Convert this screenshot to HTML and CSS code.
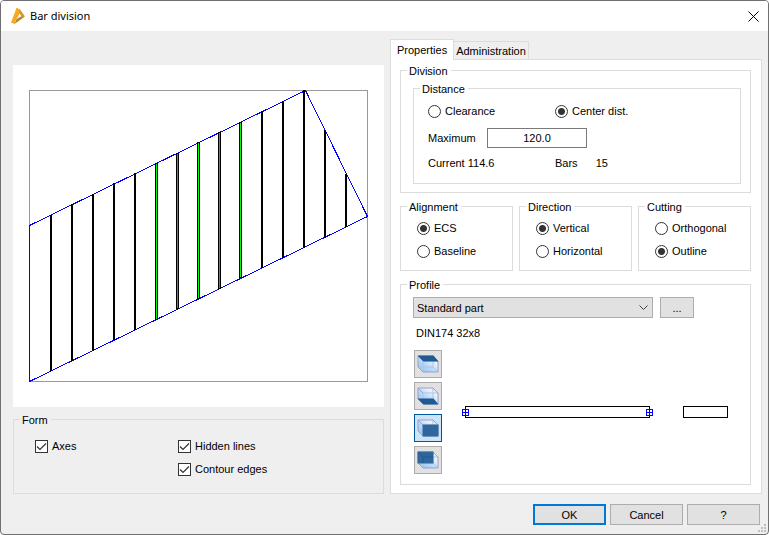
FILE: index.html
```html
<!DOCTYPE html>
<html lang="en">
<head>
<meta charset="utf-8">
<title>Bar division</title>
<meta name="viewport" content="width=device-width, initial-scale=1">
<link rel="stylesheet" href="styles.css">
</head>
<body>
<div class="window">
  <header class="titlebar">
    <svg class="logo" width="16" height="18" viewBox="0 0 16 18" aria-hidden="true">
      <path d="M6.500 1L10 2.500 15 9.500 11.800 9.800 9.400 6.200 6.500 12.500Z" fill="#d9951f"/>
      <path d="M15 9.500L4.500 17 6.500 12 11.500 9.300Z" fill="#b8862d"/>
      <path d="M6.500 1L10 2.500 4.500 17 1 15.500Z" fill="#f9a825"/>
    </svg>
    <h1 class="title">Bar division</h1>
    <button class="close" type="button" aria-label="Close">
      <svg width="11" height="11" viewBox="0 0 11 11" aria-hidden="true"><path d="M.5 .5L10.500 10.500M10.500 .5L.5 10.500" stroke="#000" fill="none"/></svg>
    </button>
  </header>

  <main class="content">
    <section class="left">
      <div class="preview">
        <svg viewBox="0 0 371 342" shape-rendering="crispEdges" role="img" aria-label="Bar layout">
          <rect x="16.500" y="25.500" width="338" height="291" fill="none" stroke="#999"/>
          <path d="M16.500 316.500V160.500L292.500 25.500L354.500 151.500Z" fill="none" stroke="#00f"/>
          <g fill="#000">
            <rect x="37" y="150" width="2" height="156"/>
            <rect x="58" y="139" width="2" height="157"/>
            <rect x="79" y="129" width="2" height="157"/>
            <rect x="100" y="118" width="2" height="157"/>
            <rect x="121" y="108" width="2" height="157"/>
            <rect x="142" y="98" width="3" height="157"/>
            <rect x="163" y="88" width="3" height="156"/>
            <rect x="184" y="77" width="3" height="157"/>
            <rect x="205" y="67" width="3" height="157"/>
            <rect x="226" y="57" width="3" height="156"/>
            <rect x="248" y="46" width="2" height="157"/>
            <rect x="269" y="36" width="2" height="157"/>
            <rect x="290" y="25" width="2" height="158"/>
            <rect x="311" y="65" width="2" height="108"/>
            <rect x="332" y="109" width="2" height="53"/>
          </g>
          <g fill="#0f0">
            <rect x="143" y="99" width="1" height="155"/>
            <rect x="185" y="78" width="1" height="155"/>
            <rect x="227" y="58" width="1" height="154"/>
          </g>
          <g fill="#4a9a4a">
            <rect x="164" y="89" width="1" height="154"/>
            <rect x="206" y="68" width="1" height="155"/>
          </g>
        </svg>
      </div>
      <fieldset class="group form">
        <legend>Form</legend>
        <label class="choice"><input type="checkbox" checked>Axes</label>
        <div class="stack">
          <label class="choice"><input type="checkbox" checked>Hidden lines</label>
          <label class="choice"><input type="checkbox" checked>Contour edges</label>
        </div>
      </fieldset>
    </section>

    <section class="right">
      <div class="tabs" role="tablist">
        <button class="tab active" type="button" role="tab" aria-selected="true">Properties</button>
        <button class="tab" type="button" role="tab" aria-selected="false">Administration</button>
      </div>
      <div class="panel" role="tabpanel">
        <fieldset class="group division">
          <legend>Division</legend>
          <fieldset class="group distance">
            <legend>Distance</legend>
            <div class="pair">
              <label class="choice"><input type="radio" name="distance">Clearance</label>
              <label class="choice"><input type="radio" name="distance" checked>Center dist.</label>
            </div>
            <div class="field">
              <label for="maximum">Maximum</label>
              <input id="maximum" class="number" type="text" value="120.0">
            </div>
            <div class="pair readout">
              <span>Current 114.6</span>
              <span class="bars"><span>Bars</span><span>15</span></span>
            </div>
          </fieldset>
        </fieldset>

        <div class="triple">
          <fieldset class="group options">
            <legend>Alignment</legend>
            <label class="choice"><input type="radio" name="alignment" checked>ECS</label>
            <label class="choice"><input type="radio" name="alignment">Baseline</label>
          </fieldset>
          <fieldset class="group options">
            <legend>Direction</legend>
            <label class="choice"><input type="radio" name="direction" checked>Vertical</label>
            <label class="choice"><input type="radio" name="direction">Horizontal</label>
          </fieldset>
          <fieldset class="group options">
            <legend>Cutting</legend>
            <label class="choice"><input type="radio" name="cutting">Orthogonal</label>
            <label class="choice"><input type="radio" name="cutting" checked>Outline</label>
          </fieldset>
        </div>

        <fieldset class="group profile">
          <legend>Profile</legend>
          <div class="picker">
            <select class="select" aria-label="Profile type"><option>Standard part</option></select>
            <button class="button browse" type="button">...</button>
          </div>
          <p class="name">DIN174 32x8</p>
          <div class="placement">
            <div class="planes">
              <button class="plane" type="button" aria-label="Top">
                <svg width="22" height="18" viewBox="0 0 22 18" aria-hidden="true"><use href="#cuboid"/><path d="M.5 .5H16.500L21.500 6.500H6.500Z" fill="#1f5a92"/></svg>
              </button>
              <button class="plane" type="button" aria-label="Bottom">
                <svg width="22" height="18" viewBox="0 0 22 18" aria-hidden="true"><use href="#cuboid"/><path d="M.5 11.500H16.500L21.500 17.500H6.500Z" fill="#1f5a92"/></svg>
              </button>
              <button class="plane selected" type="button" aria-label="Front">
                <svg width="22" height="18" viewBox="0 0 22 18" aria-hidden="true"><use href="#cuboid"/><path d="M5.500 5.500H21.500V17.500H5.500Z" fill="#2f669c"/></svg>
              </button>
              <button class="plane" type="button" aria-label="Back">
                <svg width="22" height="18" viewBox="0 0 22 18" aria-hidden="true"><use href="#cuboid"/><path d="M.5 .5H16.500V12.500H.5Z" fill="#2f669c"/><path d="M1 1L6 6V12M6 6H16" stroke="#1f5a92" fill="none"/></svg>
              </button>
            </div>
            <svg class="section" viewBox="0 0 299 124" shape-rendering="crispEdges" role="img" aria-label="Bar views">
              <g fill="none" stroke="#000">
                <rect x="23.500" y="56.500" width="184" height="11"/>
                <rect x="241.500" y="56.500" width="44" height="11"/>
              </g>
              <path d="M20.500 59.500h6v6h-6zM23.500 59.500v6M20.500 62.500h6M204.500 59.500h6v6h-6zM207.500 59.500v6M204.500 62.500h6" fill="none" stroke="#00f"/>
            </svg>
          </div>
        </fieldset>
      </div>
    </section>
  </main>

  <footer class="actions">
    <button class="button default" type="button">OK</button>
    <button class="button" type="button">Cancel</button>
    <button class="button" type="button">?</button>
  </footer>
  <svg class="grip" width="8" height="8" viewBox="0 0 8 8" aria-hidden="true"><path d="M6 0h2v2h-2zM3 3h2v2h-2zM6 3h2v2h-2zM0 6h2v2h-2zM3 6h2v2h-2zM6 6h2v2h-2z" fill="#bfbfbf"/></svg>
</div>

<svg class="defs" aria-hidden="true">
  <defs>
    <linearGradient id="glass" x1="0" y1="1" x2="1" y2="0">
      <stop offset="0" stop-color="#8fc0f2"/><stop offset=".45" stop-color="#b9dbfa"/><stop offset=".75" stop-color="#f0f4fa"/><stop offset="1" stop-color="#d8e4f2"/>
    </linearGradient>
    <g id="cuboid">
      <path d="M1 1H16L21 6V17H6L1 12Z" fill="url(#glass)"/>
      <path d="M6 6V17M16 1V12H1M1 12L6 17M16 12L21 17M6 6H21" fill="none" stroke="#b4c2e4"/>
      <path d="M1 1H16L21 6V17H6L1 12ZM1 1L6 6" fill="none" stroke="#9a9fce"/>
    </g>
  </defs>
</svg>
</body>
</html>
```

FILE: styles.css
```css
* { box-sizing: border-box; }

body {
  margin: 0;
  background: #fff;
  color: #000;
  font: 11px/14px "Liberation Sans", Arial, sans-serif;
}

button, input, select { font: inherit; color: inherit; margin: 0; }

.window {
  position: relative;
  display: flex;
  flex-direction: column;
  min-height: 100vh;
  border: 1px solid #707070;
  border-radius: 4px;
  background: #efefef;
}

.titlebar {
  display: flex;
  align-items: center;
  height: 30px;
  padding: 0 9px;
  background: #fff;
  border-radius: 3px 3px 0 0;
}
.title { flex: 1; margin: 0 0 0 4px; font: 11px/16px "Noto Sans", sans-serif; }
.close { display: flex; padding: 0; border: 0; background: none; }

.content {
  display: grid;
  grid-template-columns: 371fr 372fr;
  gap: 6px;
  padding: 8px 6px 0 12px;
}

.left { padding-top: 26px; }
.preview { background: #fff; }
.preview svg { display: block; width: 100%; }

.group {
  --inset: 12px;
  min-width: 0;
  margin: 0;
  padding: 6px 9px 10px var(--inset);
  border: 1px solid #dcdcdc;
}
.group > legend { height: 13px; margin-left: calc(6px - var(--inset)); padding: 0 3px 0 2px; }

.choice { display: flex; align-items: center; gap: 4px; height: 18px; white-space: nowrap; }
.choice input {
  appearance: none;
  flex: none;
  width: 13px;
  height: 13px;
  border: 1px solid #333;
  background: #fff;
}
.choice input[type="radio"] { border-radius: 50%; }
.choice input[type="radio"]:checked { background: radial-gradient(circle, #333 3px, #fff 4px); }
.choice input[type="checkbox"]:checked {
  background: #fff url("data:image/svg+xml,%3Csvg xmlns='http://www.w3.org/2000/svg' viewBox='0 0 11 11'%3E%3Cpath d='M1 5.500L4 8.500L10 2.500' fill='none' stroke='%23333' stroke-width='1.200'/%3E%3C/svg%3E");
}

.form {
  --inset: 21px;
  display: grid;
  grid-template-columns: 143fr 184fr;
  align-items: start;
  margin-top: 6px;
  padding: 11px 21px 15px var(--inset);
}
.stack { display: grid; gap: 5px; }

.tabs { display: flex; align-items: flex-end; height: 20px; }
.tab { height: 18px; padding: 0 2px; border: 1px solid #dcdcdc; border-width: 1px 1px 0 0; background: #efefef; white-space: nowrap; }
.tab.active { position: relative; height: 21px; margin-bottom: -1px; padding: 0 6px; border-left-width: 1px; background: #fff; }
.panel { display: grid; gap: 7px; padding: 4px 10px 8px 9px; border: 1px solid #dcdcdc; background: #fff; }

.division { padding-bottom: 8px; }
.distance { --inset: 14px; padding-right: 14px; padding-bottom: 13px; }
.division { padding-top: 5px; }
.distance { padding-top: 7px; }
.pair { display: grid; grid-template-columns: 127fr 171fr; }
.field { display: flex; align-items: center; margin: 8px 0; }
.field label { width: 59px; }
.number { width: 100px; height: 20px; padding: 0; border: 1px solid #7a7a7a; background: #fff; text-align: center; }
.bars { display: flex; gap: 18px; }

.triple { display: grid; grid-template-columns: repeat(3, 1fr); gap: 6px; }
.options { --inset: 16px; padding-right: 0; }
.options .choice + .choice { margin-top: 5px; }

.picker { display: flex; gap: 7px; }
.select {
  appearance: none;
  width: 240px;
  height: 21px;
  padding: 0 20px 0 3px;
  border: 1px solid #adadad;
  border-radius: 0;
  background: #e1e1e1 url("data:image/svg+xml,%3Csvg xmlns='http://www.w3.org/2000/svg' width='9' height='6'%3E%3Cpath d='M.5 .5L4.500 4.500L8.500 .5' fill='none' stroke='%23444'/%3E%3C/svg%3E") no-repeat right 4px center;
}
.button { width: 73px; height: 21px; padding: 0; border: 1px solid #adadad; background: #e1e1e1; }
.button.default { border: 2px solid #0078d7; }
.button.browse { width: 34px; }
.name { margin: 8px 3px 10px; }
.placement { display: flex; padding-left: 1px; }
.planes { display: grid; gap: 4px; }
.plane { display: grid; place-items: center; width: 28px; height: 28px; padding: 0; border: 1px solid #adadad; background: #e1e1e1; }
.plane.selected { border-color: #005499; background: #cce4f7; }
.section { flex: 1; min-width: 0; height: 124px; }

.actions { display: flex; justify-content: flex-end; gap: 4px; padding: 10px 8px 8px; }
.grip { position: absolute; right: 2px; bottom: 2px; }
.defs { position: absolute; width: 0; height: 0; }
```
